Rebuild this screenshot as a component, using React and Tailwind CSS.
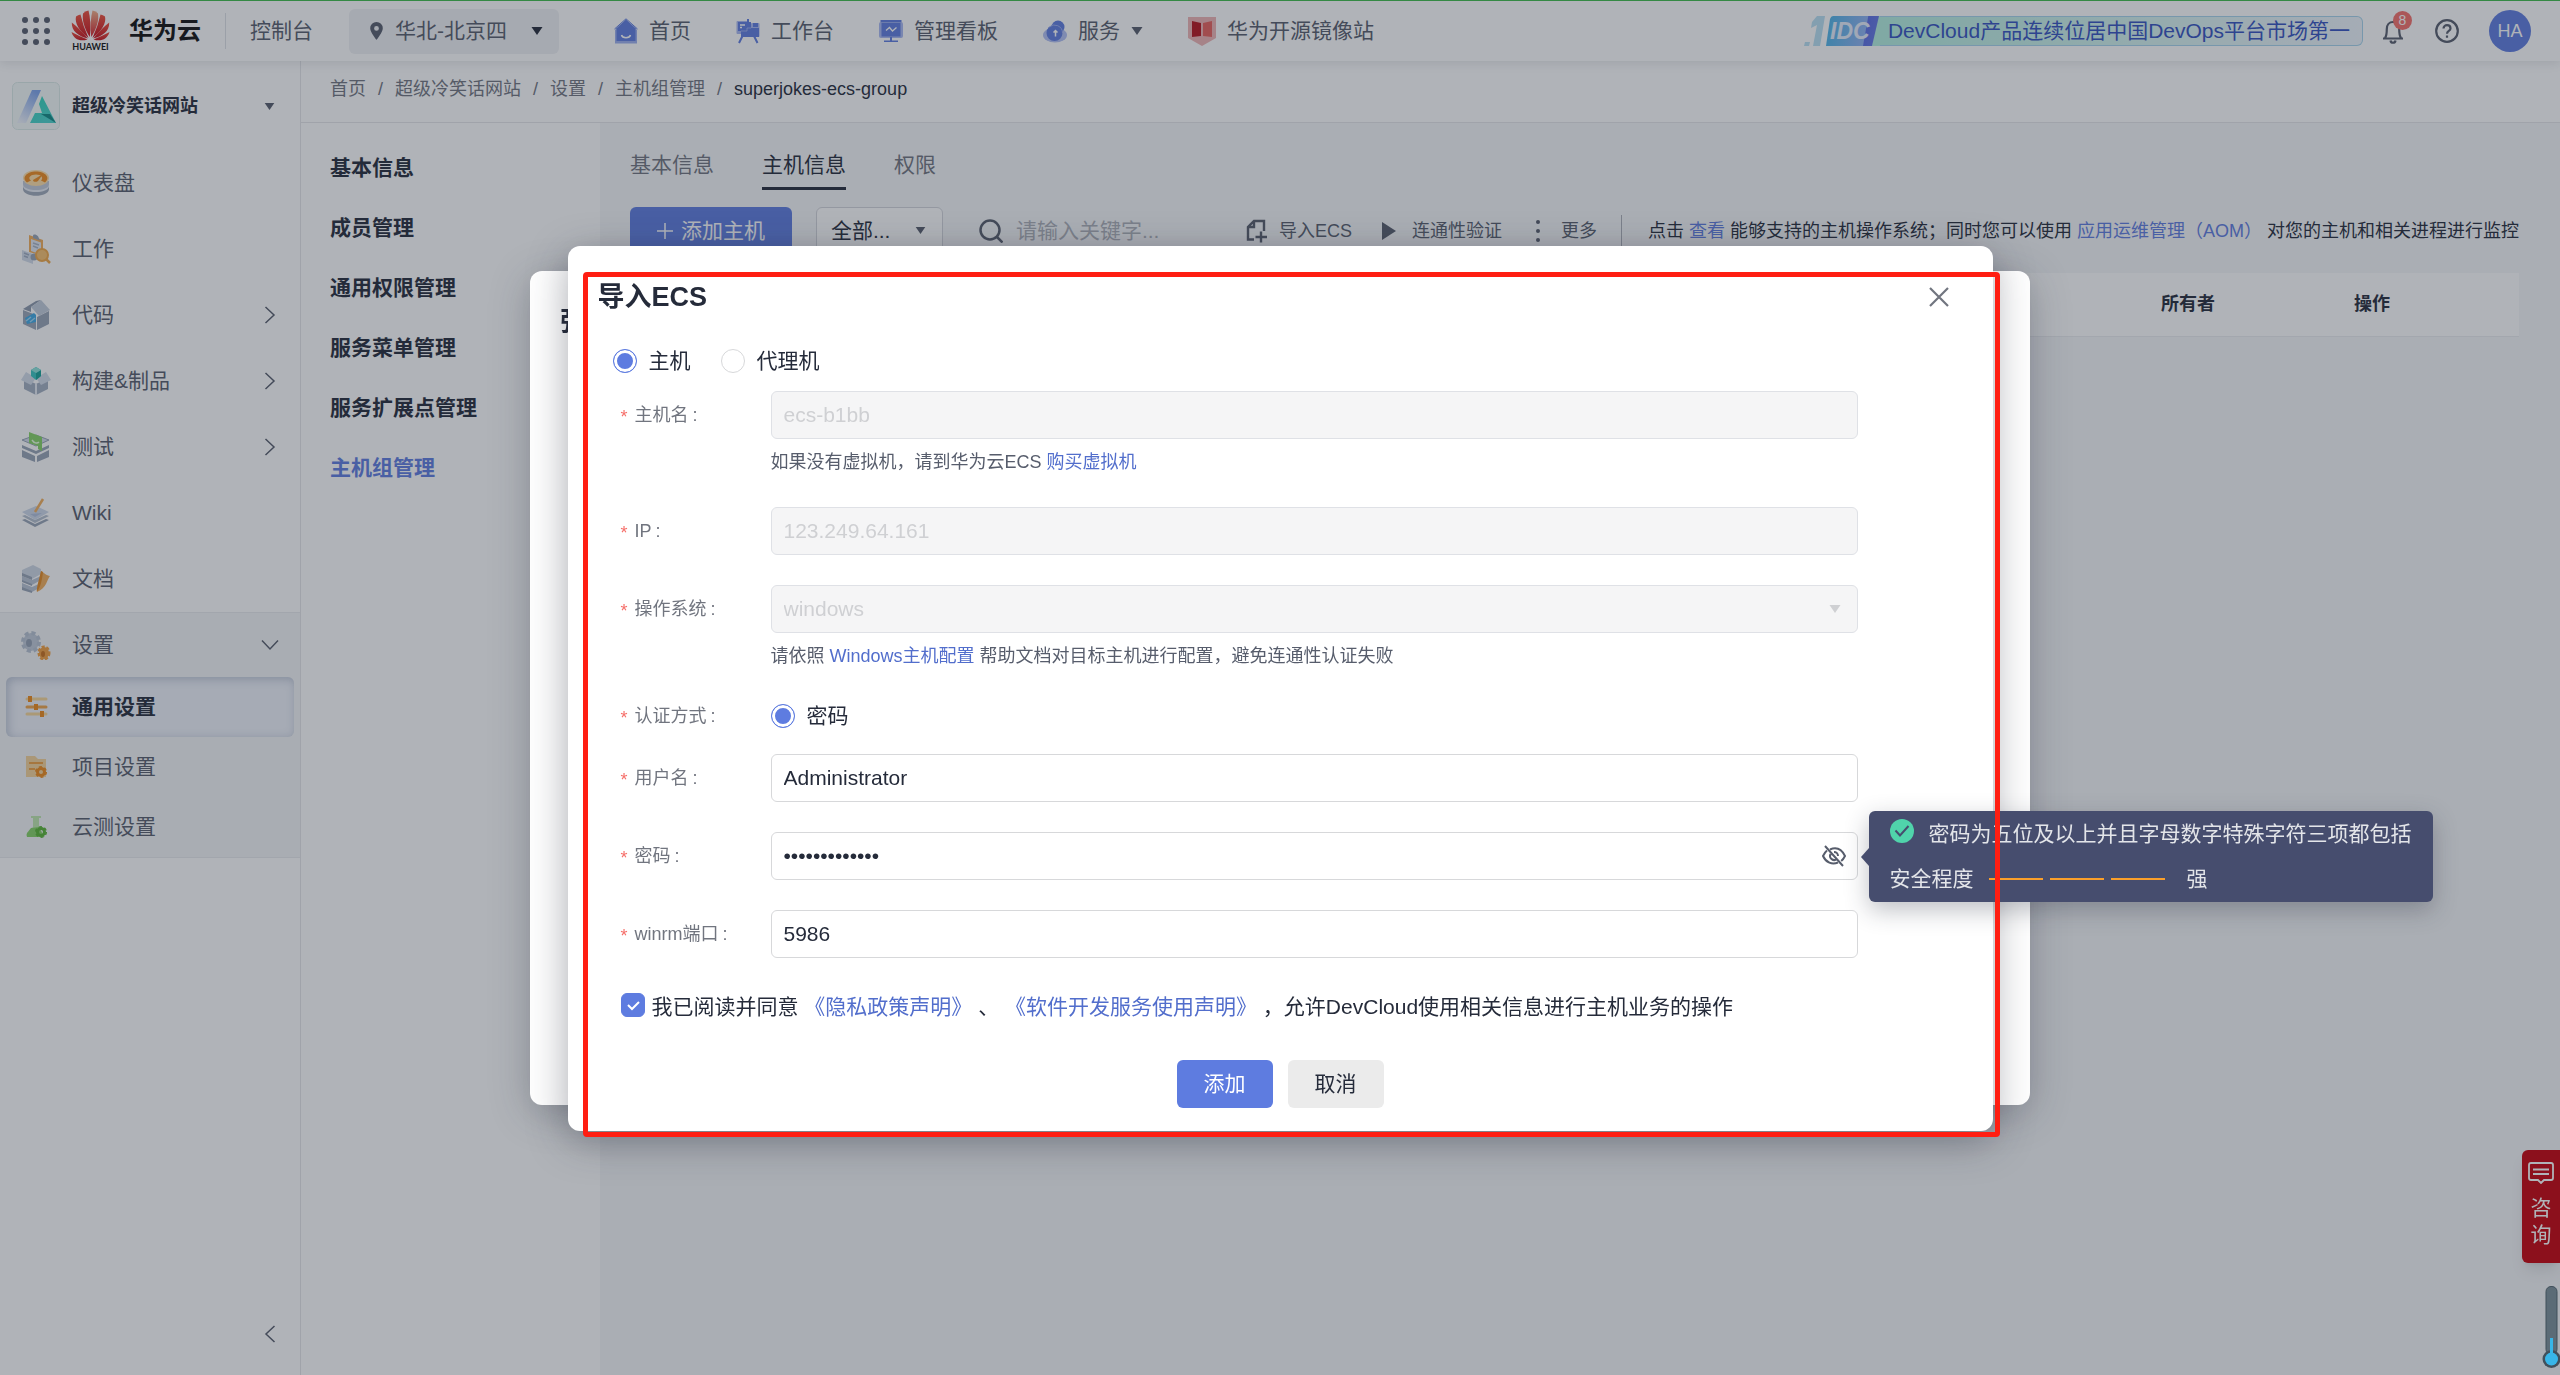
import { useState } from "react";

const FONT = "font-['Liberation_Sans','Noto_Sans_CJK_SC',sans-serif]";

function Caret({ className }) {
  return (
    <svg viewBox="0 0 12 8" className={className} fill="currentColor" aria-hidden="true">
      <path d="M0.5 0h11L6 8z" />
    </svg>
  );
}

function Chevron({ className }) {
  return (
    <svg viewBox="0 0 12 18" className={className} fill="none" stroke="currentColor" strokeWidth="1.5" aria-hidden="true">
      <path d="M1.5 1l8.5 8-8.5 8" />
    </svg>
  );
}

/* ---------- header icons ---------- */

function HuaweiLogo() {
  return (
    <svg viewBox="0 0 39 42" className="h-[42px] w-[39px]" role="img" aria-label="HUAWEI">
      <defs>
        <linearGradient id="petal" x1="0" y1="0" x2="0" y2="1">
          <stop offset="0" stopColor="#f0503c" />
          <stop offset="1" stopColor="#c8101c" />
        </linearGradient>
        <linearGradient id="petalLight" x1="0" y1="0" x2="0" y2="1">
          <stop offset="0" stopColor="#f4b088" />
          <stop offset="1" stopColor="#d4202a" />
        </linearGradient>
      </defs>
      <g fill="url(#petal)">
        <path d="M18.8 27C13 18 11 10 12 3.5Q14 1 17.5 0.5Q20.5 12 18.8 27z" />
        <path d="M17.5 28C8 21 3.5 13 5 6.5Q7 5 9.5 4.5Q12 16 17.5 28z" />
        <path d="M16.8 28.5C7 26 0.5 21 0.8 12.5Q8 18 16.8 28.5z" />
        <path d="M16.5 29.5C9 32 2.5 29 0.5 22Q8 26 16.5 29.5z" />
        <path d="M21.5 28C31 21 35.5 13 34 6.5Q32 5 29.5 4.5Q27 16 21.5 28z" />
        <path d="M22.2 28.5C32 26 38.5 21 38.2 12.5Q31 18 22.2 28.5z" />
        <path d="M22.5 29.5C30 32 36.5 29 38.5 22Q31 26 22.5 29.5z" />
      </g>
      <path d="M20.2 27C26 18 28 10 27 3.5Q25 1 21.5 0.5Q18.5 12 20.2 27z" fill="url(#petalLight)" />
      <text x="19.5" y="40" textAnchor="middle" fontSize="9" fontWeight="700" fill="#111" fontFamily="Lato, Liberation Sans, sans-serif">
        HUAWEI
      </text>
    </svg>
  );
}

function HomeIcon() {
  return (
    <svg viewBox="0 0 24 26" className="h-[26px] w-6" aria-hidden="true">
      <path d="M1 12h22v13.5H1z" fill="#9db0f0" />
      <path d="M12 1.5L1 11.5h1.5V23h19V11.5H23z" fill="#5e7ce0" />
      <path d="M0.5 11L12 0.8 23.5 11" fill="none" stroke="#5e7ce0" />
      <path d="M7.5 17c1 3.5 8 3.5 9 0" fill="none" stroke="#fff" strokeWidth="1.5" />
    </svg>
  );
}

function WorkIcon() {
  return (
    <svg viewBox="0 0 24 26" className="h-[26px] w-6" aria-hidden="true">
      <rect x="0.5" y="3" width="12" height="13" rx="1" fill="#a9b9f2" />
      <rect x="15" y="5" width="8.5" height="14" rx="1" fill="#a9b9f2" />
      <path d="M6.5 18l-3.5 7M18 18l3.5 7" stroke="#5e7ce0" strokeWidth="2" />
      <path d="M11 1h2v3h2v6h8v9H5v-6H2V4h9z" fill="#5e7ce0" />
      <path d="M17 5h5v4h-5z" fill="#5e7ce0" />
      <path d="M4 7h5M4 9.5h2" stroke="#fff" strokeWidth="1.3" />
      <path d="M5 13h6v-3h4" fill="none" stroke="#a9b9f2" strokeWidth="0.8" />
    </svg>
  );
}

function BoardIcon() {
  return (
    <svg viewBox="0 0 24 26" className="h-[26px] w-6" aria-hidden="true">
      <rect x="0" y="4" width="24" height="16" rx="2" fill="#a9b9f2" />
      <path d="M1.5 2h21v2.2h-21zM2.5 5h19v13.5h-19z" fill="#5e7ce0" />
      <path d="M11 19h2v3.5h6V24H5v-1.5h6z" fill="#5e7ce0" />
      <path d="M7 12.5l3.5-3 3 3.5 4-3.5" fill="none" stroke="#fff" strokeWidth="1.3" />
    </svg>
  );
}

function ServiceIcon() {
  return (
    <svg viewBox="0 0 24 26" className="h-[26px] w-6" aria-hidden="true">
      <ellipse cx="12" cy="17" rx="12" ry="7.5" fill="#b3c1f4" />
      <circle cx="15" cy="9" r="6.5" fill="#5e7ce0" />
      <circle cx="11.5" cy="15" r="8" fill="#5e7ce0" />
      <path d="M6 9.200a8 8 0 0 1 13.500 6" fill="none" stroke="#a9b9f2" strokeWidth="0.8" />
      <path d="M12.500 18.500v-6M10.500 14.500l2-2 2 2" fill="none" stroke="#fff" strokeWidth="1.5" />
    </svg>
  );
}

function MirrorIcon() {
  return (
    <svg viewBox="0 0 28 30" className="h-[30px] w-7" aria-hidden="true">
      <path d="M0 1h28v21l-14 8-14-8z" fill="#f0b4b4" />
      <path d="M4 5l9 2v13l-9 1z" fill="#b8121c" />
      <path d="M24 5l-9 2v13l9 1z" fill="#e8605c" />
    </svg>
  );
}

function BellIcon() {
  return (
    <svg viewBox="0 0 22 25" className="h-[25px] w-[22px]" fill="none" stroke="#575d6c" strokeWidth="2.2" aria-hidden="true">
      <path d="M1 19.5h20M3 19c1.5-2 1.8-4 1.8-9 0-4 2.5-7 6.2-7s6.2 3 6.2 7c0 5 .3 7 1.8 9" />
      <path d="M8.5 21.5c.5 3 4.5 3 5 0" />
    </svg>
  );
}

/* ---------- sidebar icons ---------- */

const icons = {
  dashboard: (
    <>
      <path d="M2 13v8c0 9 26 9 26 0v-8z" fill="#a0abba" />
      <path d="M2 13v5c0 8 26 8 26 0v-5z" fill="#e6ebf3" />
      <path d="M2 13v3c0 8 26 8 26 0v-3z" fill="#c2cad8" />
      <ellipse cx="15" cy="10" rx="13" ry="8" fill="#ffe0a8" />
      <path d="M6 14.5c-6-5 0-11 9-11s15 6 9 11l-4-2c3-3 0-6-5-6s-9 3-5 6z" fill="#f08c1e" />
      <path d="M12 12l10-6-5 7c-2 1.5-5 1-5-1z" fill="#f08c1e" />
    </>
  ),
  work: (
    <>
      <path d="M8 1l14 5v16L8 18z" fill="#f2ae5a" />
      <path d="M10 5l10 3.5v12L10 17z" fill="#e2e8f2" />
      <path d="M12 2c0-3 6-1 6 3l2 2-8-3z" fill="#98a4b6" />
      <path d="M12 9l6 2M12 12l5 2" stroke="#a9b4c5" strokeWidth="1.5" />
      <path d="M1 16l11 4v10L1 26z" fill="#d2dcea" />
      <path d="M3 19l5 2M3 22l4 1.5" stroke="#9eabc0" strokeWidth="1.5" />
      <circle cx="13" cy="23" r="3.5" fill="#98a4b6" />
      <circle cx="21" cy="21" r="6" fill="#f8c070" stroke="#f0a848" strokeWidth="2" />
      <path d="M25 25l4 4" stroke="#f0a848" strokeWidth="2.5" />
    </>
  ),
  code: (
    <>
      <path d="M2 10l13 5v15L2 24z" fill="#9aa6b8" />
      <path d="M16 17l12-6v13l-12 6z" fill="#98a4b6" />
      <path d="M2 9L15 1l5-1-10 7v5z" fill="#8e9aad" />
      <path d="M10 7L20 0l9 10-11 6z" fill="#c3cddb" />
      <path d="M4 18l9-5 2 2v7l-9 2z" fill="#3fa9e4" />
      <path d="M5 21l5-4M9 22l5-4" stroke="#9ed6f6" strokeWidth="1.5" />
    </>
  ),
  build: (
    <>
      <path d="M3 12l12 6v11L3 23zM27 12l-12 6v11l12-6z" fill="#a3afc1" />
      <path d="M14 17h2v12h-2z" fill="#e8edf5" />
      <path d="M5 6l10 6-5 7L0 14zM25 6l-10 6 5 7 10-5z" fill="#d3ddea" />
      <path d="M10 4l5-3 5 3v6l-5 4-5-4z" fill="#38c6c0" />
      <path d="M15 7l5-3v6l-5 4z" fill="#17a398" />
      <path d="M10 4l5-3 5 3-5 3z" fill="#8fe4dc" />
    </>
  ),
  test: (
    <>
      <path d="M1 8l14-5 13 5-13 6z" fill="#d3dce9" stroke="#98a4b6" />
      <path d="M1 13l14 6 13-6v3l-13 6-14-6z" fill="#98a4b6" />
      <path d="M1 18l13 6v6L1 25zM28 18l-12 6v6l12-5z" fill="#98a4b6" />
      <path d="M8 0l13 5v14l-4-2v-3l-9-3z" fill="#86d466" />
      <path d="M11 8c2 3 5 4 7 2" stroke="#e8ffe0" strokeWidth="1.5" fill="none" />
    </>
  ),
  wiki: (
    <>
      <path d="M1 22l13 7 14-7-3-1-11 5-10-5z" fill="#98a4b6" />
      <path d="M1 18l13 7 14-7-3-1-11 5-10-5z" fill="#b4bfce" />
      <path d="M1 14l14-6 13 6-14 8z" fill="#cdd8ea" />
      <path d="M9 16l12-1-7 4z" fill="#b2c0dc" />
      <path d="M14 14L22 1" stroke="#f2ae5a" strokeWidth="2.5" />
    </>
  ),
  doc: (
    <>
      <path d="M1 6l11-5 8 4v5l-9 5-10-4z" fill="#cfd8e5" />
      <path d="M1 12l10 4 9-4v4l-9 5-10-4zM1 19l10 4 9-4v4l-9 5-10-4z" fill="#b9c4d4" />
      <path d="M1 9l10 4v3L1 12zM1 16l10 4v2L1 18zM1 23l10 4v2L1 26z" fill="#98a4b6" />
      <path d="M20 7c2 1 6 5 9 5-3 3-3 12-13 16 3-7 3-14 4-21z" fill="#f2ae5a" />
      <path d="M20 7l2 1c-1 8-2 14-6 20-1-3 2-12 4-21z" fill="#e58a22" />
    </>
  ),
  settings: (
    <>
      <ellipse cx="10" cy="12" rx="8" ry="9" fill="#c1cad8" stroke="#b8c3d2" strokeWidth="4" strokeDasharray="4 2.7" />
      <ellipse cx="8" cy="13" rx="3" ry="4" fill="#93a0b2" />
      <ellipse cx="23" cy="23" rx="5" ry="6" fill="#f2a040" stroke="#f2a040" strokeWidth="3" strokeDasharray="3 1.6" />
      <ellipse cx="22" cy="24" rx="2" ry="3" fill="#c8701c" />
    </>
  ),
  sliders: (
    <>
      <path d="M6 7h19M6 22h19" stroke="#f8d698" strokeWidth="3" strokeLinecap="round" />
      <path d="M6 15h19" stroke="#f0a44a" strokeWidth="3" strokeLinecap="round" />
      <path d="M7 4h4v6H7zM13 12h4v6h-4zM19 19h4v6h-4z" fill="#ee8a1c" />
    </>
  ),
  project: (
    <>
      <path d="M5 4h9l3 3h8v18H5z" fill="#f6d49a" />
      <path d="M8 11h14M8 17h6" stroke="#f0a040" strokeWidth="2" />
      <circle cx="20" cy="20" r="3.5" fill="none" stroke="#ee8a1c" strokeWidth="3" />
      <circle cx="20" cy="20" r="5.3" fill="none" stroke="#ee8a1c" strokeWidth="1.5" strokeDasharray="3 2.55" />
    </>
  ),
  flask: (
    <>
      <path d="M10 4h10v2h-2v9l6 10H6l6-10V6h-2z" fill="#bfe8ae" />
      <path d="M10 16l8-1 5 10H6q-1-2 0-4z" fill="#84d264" />
      <circle cx="20" cy="20" r="3.5" fill="none" stroke="#58b435" strokeWidth="3" />
      <circle cx="20" cy="20" r="5.3" fill="none" stroke="#58b435" strokeWidth="1.5" strokeDasharray="3 2.55" />
    </>
  ),
};

function SideIcon({ name }) {
  return (
    <svg viewBox="0 0 30 30" className="h-[30px] w-[30px] shrink-0" aria-hidden="true">
      {icons[name]}
    </svg>
  );
}

const menu = [
  { label: "仪表盘", icon: "dashboard" },
  { label: "工作", icon: "work" },
  { label: "代码", icon: "code", more: true },
  { label: "构建&制品", icon: "build", more: true },
  { label: "测试", icon: "test", more: true },
  { label: "Wiki", icon: "wiki" },
  { label: "文档", icon: "doc" },
];

const subMenu = [
  { label: "通用设置", icon: "sliders", active: true },
  { label: "项目设置", icon: "project" },
  { label: "云测设置", icon: "flask" },
];

const sections = ["基本信息", "成员管理", "通用权限管理", "服务菜单管理", "服务扩展点管理", "主机组管理"];
const crumbs = ["首页", "超级冷笑话网站", "设置", "主机组管理"];

function Header() {
  return (
    <header className="relative z-10 flex h-[61px] shrink-0 items-center whitespace-nowrap border-t border-[#3dbd4a] bg-white pl-[22px] pr-[29px] text-[21px] text-[#575d6c] shadow-[0_2px_10px_rgba(37,43,58,0.12)]">
      <button aria-label="全部服务">
        <svg viewBox="0 0 28 28" className="h-7 w-7" fill="#575d6c">
          {[3, 14, 25].map((y) => [3, 14, 25].map((x) => <circle key={`${x}-${y}`} cx={x} cy={y} r="3" />))}
        </svg>
      </button>
      <a href="#" className="ml-[21px] flex items-center gap-[19px]">
        <HuaweiLogo />
        <span className="text-2xl font-bold text-[#111]">华为云</span>
      </a>
      <div className="ml-6 h-9 w-px bg-[#dfe1e6]" />
      <a href="#" className="ml-6">控制台</a>
      <button className="ml-9 flex h-[45px] w-[210px] items-center rounded-md bg-[#f0f1f4] pl-[21px] pr-4">
        <svg viewBox="0 0 13 18" className="mr-3 h-[18px] w-[13px]" fill="#575d6c">
          <path fillRule="evenodd" d="M6.5 0a6.3 6.3 0 0 1 6.3 6.3c0 4-6.3 11.7-6.3 11.7S.2 10.3.2 6.3A6.3 6.3 0 0 1 6.5 0zm0 4a2.4 2.4 0 1 0 0 4.8 2.4 2.4 0 0 0 0-4.8z" />
        </svg>
        华北-北京四
        <Caret className="ml-auto h-2 w-3 text-[#252b3a]" />
      </button>
      <nav className="ml-[55px] flex items-center gap-[45px]">
        <a href="#" className="flex items-center gap-[11px]"><HomeIcon />首页</a>
        <a href="#" className="flex items-center gap-[11px]"><WorkIcon />工作台</a>
        <a href="#" className="flex items-center gap-[11px]"><BoardIcon />管理看板</a>
        <a href="#" className="flex items-center gap-[11px]"><ServiceIcon />服务<Caret className="h-2 w-3" /></a>
        <a href="#" className="flex items-center gap-[11px]"><MirrorIcon />华为开源镜像站</a>
      </nav>
      <a href="#" className="ml-auto flex h-[30px] items-center text-[#3552c0]">
        <svg viewBox="0 0 76 30" className="h-[30px] w-[76px]" aria-hidden="true">
          <defs>
            <linearGradient id="idc" x1="0" x2="1" y2="0.100">
              <stop offset="0" stopColor="#49b6e8" />
              <stop offset="0.78" stopColor="#8fb2f2" />
              <stop offset="0.8" stopColor="#5a6ee4" />
              <stop offset="1" stopColor="#6478e4" />
            </linearGradient>
          </defs>
          <path d="M70 0h6v30h-8z" fill="#b4efe0" />
          <path d="M13 0h8l-5 30H9l4-21-6 3 1-6zM1 26h5l-1 4H0z" fill="#b9e0f2" />
          <path d="M29 0h46l-7 30H22l4-27q1-3 3-3z" fill="url(#idc)" />
          <text x="26" y="23" fontSize="23" fontWeight="700" fontStyle="italic" fill="#e6eefc" fontFamily="Liberation Sans, sans-serif">IDC</text>
        </svg>
        <span className="flex h-[30px] items-center rounded-r-md border border-l-0 border-[#a6d4ec] bg-linear-to-r from-[#b4efe0] to-[#eef4fb] pl-2 pr-3">
          DevCloud产品连续位居中国DevOps平台市场第一
        </span>
      </a>
      <button className="relative ml-[19px]" aria-label="消息">
        <BellIcon />
        <span className="absolute -right-2 -top-2 flex h-[19px] w-[19px] items-center justify-center rounded-full bg-[#f66f6a] text-sm text-white">8</span>
      </button>
      <button className="ml-[31px]" aria-label="帮助">
        <svg viewBox="0 0 24 24" className="h-6 w-6" fill="none" stroke="#575d6c" strokeWidth="2.2">
          <circle cx="12" cy="12" r="10.8" />
          <path d="M8.5 9.5c0-4.5 7-4.5 7 0 0 2.5-3.5 2.5-3.5 5.2M12 16.5v2.3" />
        </svg>
      </button>
      <button className="ml-[30px] h-[42px] w-[42px] rounded-full bg-[#5e7ce0] text-lg text-white">HA</button>
    </header>
  );
}

function Sidebar() {
  return (
    <aside className="flex w-[301px] shrink-0 flex-col border-r border-[#e6e7ea] bg-white pt-[21px] text-[21px] text-[#575d6c]">
      <button className="flex h-12 items-center pl-3 pr-[25px] text-lg font-bold text-[#252b3a]">
        <svg viewBox="0 0 48 48" className="mr-3 h-12 w-12" aria-hidden="true">
          <defs>
            <linearGradient id="bar" x1="0.7" y1="0" x2="0.2" y2="1">
              <stop offset="0" stopColor="#7da4ec" />
              <stop offset="1" stopColor="#eef3fc" />
            </linearGradient>
            <linearGradient id="leg" x1="0" y1="0" x2="0.5" y2="1">
              <stop offset="0" stopColor="#2cd6b8" />
              <stop offset="1" stopColor="#4ad4cc" />
            </linearGradient>
          </defs>
          <rect x="0.5" y="0.5" width="47" height="47" rx="5" fill="#f4faf9" stroke="#dcebe8" />
          <path d="M5 41L20 8h9L14 41z" fill="url(#bar)" />
          <path d="M30 14l14 27H18l5-10h7l-3-9z" fill="url(#leg)" />
          <path d="M29 32h9l6 9z" fill="#118a86" />
        </svg>
        超级冷笑话网站
        <Caret className="ml-auto h-[7px] w-[11px] text-[#575d6c]" />
      </button>
      <nav className="mt-5">
        {menu.map((m) => (
          <a key={m.label} href="#" className="flex h-[66px] items-center gap-[21px] pl-[21px] pr-6">
            <SideIcon name={m.icon} />
            {m.label}
            {m.more && <Chevron className="ml-auto h-[18px] w-3" />}
          </a>
        ))}
        <div className="border-y border-[#eaebee] bg-[#f5f6f7]">
          <a href="#" className="flex h-16 items-center gap-[21px] pl-[21px] pr-6">
            <SideIcon name="settings" />
            设置
            <Chevron className="ml-auto h-[18px] w-3 rotate-90" />
          </a>
          {subMenu.map((m) => (
            <a
              key={m.label}
              href="#"
              className={
                m.active
                  ? "mx-[6px] flex h-[60px] items-center gap-[21px] rounded-md bg-[#eff2fa] pl-[15px] font-bold text-[#252b3a] shadow-[inset_2px_2px_10px_rgba(90,110,140,0.35)]"
                  : "flex h-[60px] items-center gap-[21px] pl-[21px]"
              }
            >
              <SideIcon name={m.icon} />
              {m.label}
            </a>
          ))}
        </div>
      </nav>
      <button className="mb-8 ml-auto mr-6 mt-auto" aria-label="收起菜单">
        <Chevron className="h-[18px] w-3 rotate-180" />
      </button>
    </aside>
  );
}

function Toolbar() {
  return (
    <div className="mt-[17px] flex h-12 items-center whitespace-nowrap text-lg text-[#575d6c]">
      <button className="flex h-12 w-[162px] items-center justify-center gap-2 rounded-md bg-[#5e7ce0] text-[21px] text-white">
        <svg viewBox="0 0 16 16" className="h-4 w-4" stroke="currentColor" strokeWidth="1.5"><path d="M8 0v16M0 8h16" /></svg>
        添加主机
      </button>
      <div className="relative ml-6">
        <select aria-label="范围" className="h-12 w-[127px] appearance-none rounded-md border border-[#d3d5db] bg-white pl-[14px] text-[21px] text-[#252b3a]">
          <option>全部...</option>
        </select>
        <Caret className="pointer-events-none absolute right-[17px] top-5 h-[7px] w-[11px]" />
      </div>
      <svg viewBox="0 0 24 24" className="ml-9 h-6 w-6 shrink-0" fill="none" stroke="currentColor" strokeWidth="2.5" aria-hidden="true">
        <circle cx="11" cy="11" r="9.5" />
        <path d="M17.5 17.5l6 6" />
      </svg>
      <input aria-label="搜索" placeholder="请输入关键字..." className="ml-[13px] w-[230px] bg-transparent text-[21px] placeholder:text-[#adb0b8]" />
      <button className="flex items-center gap-[11px]">
        <svg viewBox="0 0 22 24" className="h-6 w-[22px]" fill="none" stroke="currentColor" strokeWidth="2.4" aria-hidden="true">
          <path d="M8 20.5H2V8l6-6h10v10M3 8h5V3M15 12.5v11M9.5 18H21" />
        </svg>
        导入ECS
      </button>
      <button className="ml-[30px] flex items-center gap-4">
        <svg viewBox="0 0 14 18" className="h-[18px] w-[14px]" fill="currentColor" aria-hidden="true"><path d="M0 0l14 9-14 9z" /></svg>
        连通性验证
      </button>
      <button className="ml-[34px] flex items-center gap-[21px]">
        <svg viewBox="0 0 4 22" className="h-[22px] w-1" fill="currentColor" aria-hidden="true">
          <circle cx="2" cy="2" r="2" /><circle cx="2" cy="11" r="2" /><circle cx="2" cy="20" r="2" />
        </svg>
        更多
      </button>
      <div className="ml-6 h-8 w-px bg-[#adb0b8]" />
      <p className="ml-[26px] text-[#252b3a]">
        点击 <a href="#" className="text-[#5e7ce0]">查看</a> 能够支持的主机操作系统；同时您可以使用{" "}
        <a href="#" className="text-[#5e7ce0]">应用运维管理（AOM）</a> 对您的主机和相关进程进行监控
      </p>
    </div>
  );
}

function Field({ id, label, help, children }) {
  return (
    <div className="mb-[30px] flex">
      <FieldLabel id={id} label={label} />
      <div className="relative flex-1">
        {children}
        {help && <p className="mt-2 text-lg leading-[30px] text-[#575d6c]">{help}</p>}
      </div>
    </div>
  );
}

function FieldLabel({ id, label }) {
  return (
    <label htmlFor={id} className="flex h-12 w-[150px] shrink-0 items-center text-lg text-[#71757f]">
      <span className="mr-[7px] pt-1 text-[#f66f6a]">*</span>
      {label}
      <span className="ml-1">:</span>
    </label>
  );
}

const inputClass =
  "block h-12 w-full rounded-md border border-[#d7d8da] bg-white px-3 text-[21px] text-[#252b3a] disabled:border-[#dfe1e6] disabled:bg-[#f5f5f6] disabled:text-[#cfd0d3] disabled:opacity-100";

const radioClass =
  "h-6 w-6 shrink-0 appearance-none rounded-full border border-[#d7d8da] bg-white checked:border-[#5e7ce0] checked:bg-[#5e7ce0] checked:shadow-[inset_0_0_0_3px_white]";

function PasswordHint() {
  return (
    <div role="tooltip" className="absolute -top-[21px] left-full ml-[11px] h-[91px] w-[564px] whitespace-nowrap rounded-md bg-[#464d6e] px-[21px] text-[21px] text-[#e3e5e9] shadow-[0_8px_24px_rgba(37,43,58,0.3)]">
      <svg viewBox="0 0 8 18" className="absolute -left-2 top-[37px] h-[18px] w-2" fill="#464d6e" aria-hidden="true"><path d="M8 0v18L0 9z" /></svg>
      <div className="flex h-[46px] items-center gap-[15px]">
        <svg viewBox="0 0 24 24" className="mb-[6px] h-6 w-6" aria-hidden="true">
          <circle cx="12" cy="12" r="12" fill="#50d4ab" />
          <path d="M5.5 11.5l4.5 5 8.5-9.5" fill="none" stroke="#464d6e" strokeWidth="2" />
        </svg>
        密码为五位及以上并且字母数字特殊字符三项都包括
      </div>
      <div className="flex h-11 items-center">
        <span className="mr-[15px]">安全程度</span>
        <span className="mr-[7px] h-[2px] w-[54px] bg-[#fa9f2a]" />
        <span className="mr-[7px] h-[2px] w-[54px] bg-[#fa9f2a]" />
        <span className="mr-[22px] h-[2px] w-[54px] bg-[#fa9f2a]" />
        强
      </div>
    </div>
  );
}

function ImportDialog() {
  const [target, setTarget] = useState("host");
  const [agreed, setAgreed] = useState(true);

  return (
    <div role="dialog" aria-label="导入ECS" className="relative w-[1425px] max-w-full rounded-xl bg-white pb-[23px] pt-[31px] text-[21px] text-[#252b3a] shadow-[0_10px_40px_rgba(37,43,58,0.4)]">
      <div className="flex h-10 items-center justify-between pl-[30px] pr-[44px]">
        <h2 className="text-[27px] font-bold">导入ECS</h2>
        <button aria-label="关闭">
          <svg viewBox="0 0 20 20" className="h-5 w-5" fill="none" stroke="#71757f" strokeWidth="2.2"><path d="M1 1l18 18M19 1L1 19" /></svg>
        </button>
      </div>

      <form className="pl-[53px] pr-[135px]" onSubmit={(e) => e.preventDefault()}>
        <div className="-ml-2 mt-[30px] flex h-7 items-center gap-[30px]">
          <label className="flex items-center gap-3">
            <input type="radio" name="target" className={radioClass} checked={target === "host"} onChange={() => setTarget("host")} />
            主机
          </label>
          <label className="flex items-center gap-3">
            <input type="radio" name="target" className={radioClass} checked={target === "proxy"} onChange={() => setTarget("proxy")} />
            代理机
          </label>
        </div>

        <div className="mt-4">
          <Field
            id="host"
            label="主机名"
            help={<>如果没有虚拟机，请到华为云ECS <a href="#" className="text-[#526ecc]">购买虚拟机</a></>}
          >
            <input id="host" className={inputClass} defaultValue="ecs-b1bb" disabled />
          </Field>
          <Field id="ip" label="IP">
            <input id="ip" className={inputClass} defaultValue="123.249.64.161" disabled />
          </Field>
          <Field
            id="os"
            label="操作系统"
            help={<>请依照 <a href="#" className="text-[#526ecc]">Windows主机配置</a> 帮助文档对目标主机进行配置，避免连通性认证失败</>}
          >
            <select id="os" className={`${inputClass} appearance-none`} disabled>
              <option>windows</option>
            </select>
            <Caret className="pointer-events-none absolute right-[17px] top-5 h-2 w-3 text-[#cfd0d3]" />
          </Field>
          <div className="mb-[23px] flex h-[30px] items-center">
            <FieldLabel id="auth" label="认证方式" />
            <label className="flex items-center gap-3">
              <input id="auth" type="radio" name="auth" className={radioClass} defaultChecked />
              密码
            </label>
          </div>
          <Field id="user" label="用户名">
            <input id="user" className={inputClass} defaultValue="Administrator" />
          </Field>
          <Field id="password" label="密码">
            <input id="password" type="password" className={inputClass} defaultValue="Superjokes@12" />
            <button type="button" aria-label="显示密码" className="absolute right-3 top-3">
              <svg viewBox="0 0 24 24" className="h-6 w-6" fill="none" stroke="#575d6c" strokeWidth="2">
                <path d="M8 5.5C15 2.5 20 6 23 12c-1 2-2.2 3.8-3.8 5M5 6.5C3.2 8 2 9.800 1 12c3 6.5 9 9 15 6.5" />
                <path d="M8.5 10c-2 4 3 8 6.5 5M3 2l18 20M12 8c2 0 4 1.5 4 4" />
              </svg>
            </button>
            <PasswordHint />
          </Field>
          <Field id="port" label="winrm端口">
            <input id="port" className={inputClass} defaultValue="5986" />
          </Field>
        </div>

        <div className="mt-[33px] flex h-8 items-center whitespace-nowrap">
          <span className="relative mb-1 mr-[7px] h-6 w-6">
            <input
              id="agree"
              type="checkbox"
              className="block h-6 w-6 appearance-none rounded-md border border-[#adb0b8] checked:border-[#5e7ce0] checked:bg-[#5e7ce0]"
              checked={agreed}
              onChange={(e) => setAgreed(e.target.checked)}
            />
            {agreed && (
              <svg viewBox="0 0 24 24" className="pointer-events-none absolute inset-0 h-6 w-6" fill="none" stroke="white" strokeWidth="2"><path d="M7 12l4 4 7-7" /></svg>
            )}
          </span>
          <label htmlFor="agree">
            我已阅读并同意 <a href="#" className="text-[#526ecc]">《隐私政策声明》</a> 、{" "}
            <a href="#" className="text-[#526ecc]">《软件开发服务使用声明》</a> ，允许DevCloud使用相关信息进行主机业务的操作
          </label>
        </div>
      </form>

      <div className="mt-[37px] flex justify-center gap-[15px]">
        <button className="h-12 w-24 rounded-md bg-[#5e7ce0] text-white">添加</button>
        <button className="h-12 w-24 rounded-md bg-[#ebebeb]">取消</button>
      </div>

      <div className="pointer-events-none absolute -bottom-[6px] -right-[7px] left-[15px] top-[26px] rounded border-[5px] border-[#ff1e12]" />
    </div>
  );
}

export default function App() {
  return (
    <div className={`${FONT} flex min-h-screen flex-col overflow-x-hidden bg-white leading-normal`}>
      <Header />
      <div className="flex flex-1">
        <Sidebar />
        <div className="flex min-w-0 flex-1 flex-col">
          <nav className="flex h-[62px] items-center gap-3 border-b border-[#e6e7ea] pb-[6px] pl-[29px] text-lg text-[#71757f]">
            {crumbs.map((c) => (
              <span key={c} className="flex gap-3"><a href="#">{c}</a><span>/</span></span>
            ))}
            <span className="text-[#252b3a]">superjokes-ecs-group</span>
          </nav>
          <div className="flex flex-1">
            <nav className="w-[299px] shrink-0 pt-[15px] text-[21px] font-bold text-[#252b3a]">
              {sections.map((s) => (
                <a key={s} href="#" className={`flex h-[60px] items-center pl-[29px] ${s === "主机组管理" ? "text-[#5e7ce0]" : ""}`}>
                  {s}
                </a>
              ))}
            </nav>
            <main className="min-w-0 flex-1 bg-[#f6f7f9] pl-[30px] pr-[41px] pt-[23px]">
              <div className="flex gap-12 text-[21px] text-[#71757f]" role="tablist">
                <button role="tab" className="h-11 pb-[6px]">基本信息</button>
                <button role="tab" aria-selected="true" className="h-11 border-b-[3px] border-[#252b3a] pb-[3px] text-[#252b3a]">主机信息</button>
                <button role="tab" className="h-11 pb-[6px]">权限</button>
              </div>
              <Toolbar />
              <table className="mt-[18px] w-full table-fixed border-collapse text-left text-lg text-[#252b3a]">
                <thead>
                  <tr className="h-[63px] border-b border-[#ebecef] bg-white">
                    <td />
                    <th className="w-[193px] pl-7">所有者</th>
                    <th className="w-[193px] pl-7">操作</th>
                  </tr>
                </thead>
              </table>
            </main>
          </div>
        </div>
      </div>

      <aside className="fixed bottom-28 right-0 flex w-[38px] flex-col items-center rounded-l-md bg-[#c7000b] pb-[15px] pt-3 text-[21px] leading-[27px] text-white shadow-lg">
        <svg viewBox="0 0 26 22" className="mb-[10px] h-[22px] w-[26px]" fill="none" stroke="currentColor" strokeWidth="1.8" aria-hidden="true">
          <path d="M3 1h20q2 0 2 2v13q0 2-2 2h-7l-3 3-3-3H3q-2 0-2-2V3q0-2 2-2zM5 7.5h16M5 12h16" />
        </svg>
        <a href="#" className="w-[21px] break-all">咨询</a>
      </aside>

      {/* backdrop and the two stacked dialogs */}
      <div className="fixed inset-0 z-20 bg-[#252b3a]/36" />
      <div className="fixed inset-0 z-30 flex items-start justify-center pt-[271px]">
        <div className="h-[834px] w-[1500px] max-w-full rounded-xl bg-white pl-[30px] pt-[31px] shadow-[0_8px_40px_rgba(37,43,58,0.3)]">
          <h2 className="text-[27px] font-bold leading-10 text-[#252b3a]">弹</h2>
        </div>
      </div>
      <div className="fixed inset-0 z-40 flex items-start justify-center pt-[246px]">
        <ImportDialog />
      </div>

      <svg viewBox="0 0 18 82" className="fixed bottom-[7px] right-0 z-50 h-[82px] w-[18px]" aria-hidden="true">
        <rect x="4" y="0.5" width="11" height="68" rx="5" fill="#5b6b76" stroke="#41505b" />
        <circle cx="9.5" cy="73" r="9" fill="#41505b" />
        <path d="M8 52h3v16H8z" fill="#38b6e8" />
        <circle cx="9.5" cy="73" r="6.5" fill="#38b6e8" />
      </svg>
    </div>
  );
}
